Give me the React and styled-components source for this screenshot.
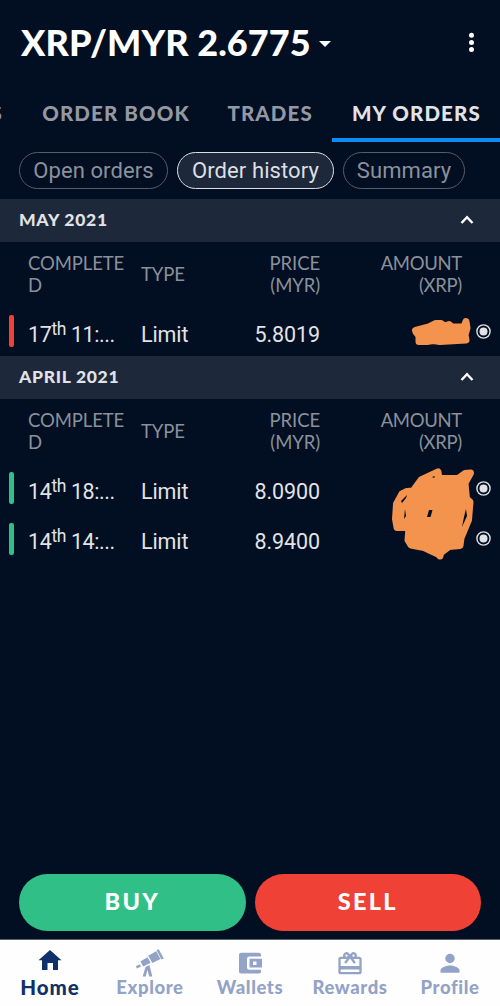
import styled, { createGlobalStyle } from "styled-components";

const GlobalStyle = createGlobalStyle`
    * {
        box-sizing: border-box;
    }
    body {
        margin: 0;
        background: #020e21;
    }
    button {
        font: inherit;
        border: 0;
        padding: 0;
        background: none;
        color: inherit;
    }
`;
const Screen = styled.div`
    display: flex;
    flex-direction: column;
    width: 500px;
    height: 1006px;
    overflow: hidden;
    background: #020e21;
    color: #e1e3e6;
    font-family: Roboto, sans-serif;
`;
const Header = styled.header`
    display: flex;
    align-items: center;
    justify-content: space-between;
    height: 84px;
    padding: 0 25px 0 21px;
    color: #fff;
`;
const Pair = styled.button`
    display: flex;
    align-items: center;
    gap: 8px;
    svg {
        margin-top: 3px;
    }
`;
const PairName = styled.span`
    font: 900 36px/44px Lato, sans-serif;
    letter-spacing: 0.07px;
    white-space: nowrap;
`;
const Tabs = styled.nav`
    display: flex;
    flex: none;
    justify-content: flex-end;
    height: 58px;
`;
const Tab = styled.button`
    display: flex;
    flex: none;
    justify-content: flex-end;
    padding-right: 19.2px;
    width: ${props => props.$width}px;
    border-bottom: 4px solid ${props => props.$active ? "#0d8cf5" : "transparent"};
    color: ${props => props.$active ? "#e1e3e6" : "#9398a2"};
    font: 900 20.5px/58px Lato, sans-serif;
    letter-spacing: 1.1px;
    white-space: nowrap;
`;
const Chips = styled.div`
    display: flex;
    gap: 9px;
    height: 57px;
    padding: 10px 19px;
`;
const Chip = styled.button`
    width: ${props => props.$width}px;
    height: 37px;
    border: 1px solid ${props => props.$active ? "#dcdfe3" : "#555c6a"};
    border-radius: 19px;
    background: ${props => props.$active ? "#1d283a" : "transparent"};
    color: ${props => props.$active ? "#dcdfe3" : "#8b919c"};
    font-size: 22px;
    letter-spacing: 0.08px;
    white-space: nowrap;
`;
const MonthBar = styled.div`
    display: flex;
    align-items: center;
    justify-content: space-between;
    height: 43px;
    padding: 0 26px 2px 19px;
    background: #1d283a;
    font: 900 17.5px/24px Lato, sans-serif;
    letter-spacing: 0.7px;
`;
const Grid = styled.div`
    display: grid;
    grid-template-columns: 19px 113px 79px 100px 142px 1fr;
    align-items: center;
    padding-left: 9px;
`;
const ColumnHeads = styled(Grid)`
    height: 64px;
    padding-bottom: 1px;
    color: #8b919c;
    font: 400 18.5px/22px Lato, sans-serif;
`;
const ColumnHead = styled.div`
    width: ${props => props.$width || "auto"};
    text-align: ${props => props.$right ? "right" : "left"};
    letter-spacing: ${props => props.$tight ? "-0.3px" : "-0.1px"};
    overflow-wrap: anywhere;
`;
const OrderRow = styled(Grid)`
    height: 50.3px;
    font-size: 21.5px;
`;
const SideMark = styled.div`
    width: 5px;
    height: 32px;
    border-radius: 2px;
    background: ${props => props.$side === "buy" ? "#2fbf87" : "#ef4136"};
`;
const Cell = styled.div`
    padding-top: 7px;
    line-height: 26px;
    text-align: ${props => props.$right ? "right" : "left"};
    letter-spacing: ${props => props.$tight ? "-0.4px" : "-0.1px"};
    white-space: nowrap;
    sup {
        font-size: 17.5px;
        line-height: 0;
        vertical-align: 7px;
    }
`;
const Radio = styled.span`
    display: flex;
    justify-content: flex-end;
    padding-right: 9px;
`;
const Orders = styled.main`
    position: relative;
    flex: 1;
`;
const Scribble = styled.svg`
    position: absolute;
    left: 380px;
    top: 100px;
    pointer-events: none;
`;
const Actions = styled.div`
    display: flex;
    gap: 9px;
    padding: 0 19px 8px;
`;
const Action = styled.button`
    flex: 1;
    height: 57px;
    border-radius: 29px;
    background: ${props => props.$side === "buy" ? "#2fbf87" : "#ef4136"};
    color: #fff;
    font: 900 23.5px/54px Lato, sans-serif;
    letter-spacing: 2.3px;
    padding-bottom: 3px;
`;
const BottomNav = styled.nav`
    display: grid;
    grid-template-columns: repeat(5, 1fr);
    height: 67px;
    border-top: 1px solid #59616d;
    background: #fefefe;
`;
const NavItem = styled.button`
    display: flex;
    flex-direction: column;
    align-items: center;
    padding-top: 8px;
    color: ${props => props.$active ? "#10306c" : "#93a2c7"};
    font: 900 ${props => props.$active ? "20.5px" : "18.5px"}/22px Lato, sans-serif;
    letter-spacing: ${props => props.$active ? "0.9px" : "0.6px"};
    svg {
        flex: none;
        overflow: visible;
    }
`;

const sections = [
    { month: "MAY 2021", orders: [{ side: "sell", day: "17", time: "11:...", price: "5.8019" }] },
    {
        month: "APRIL 2021",
        orders: [
            { side: "buy", day: "14", time: "18:...", price: "8.0900" },
            { side: "buy", day: "14", time: "14:...", price: "8.9400" },
        ],
    },
];

function HomeIcon() {
    return (
        <svg width="30" height="28" viewBox="0 0 30 28" fill="currentColor">
            <path d="M15 2 26.500 12.200H23V22H18V15H12.500V22H7V12.200H3.500Z" />
        </svg>
    );
}

function ExploreIcon() {
    return (
        <svg width="30" height="28" viewBox="0 0 30 28" fill="currentColor">
            <path d="M21.500 2.300 23.800 1.300 28.700 10.500 26.500 11.500Z" />
            <path d="M13.200 7.700 21.200 3.300 25.500 11 17.300 15Z" />
            <path d="M5.300 13.500 12.500 9.300 15.600 14.800 8.300 18.600Z" />
            <path d="M0.800 18.300 4.700 16.300 6 18.500 2 20.600Z" />
            <path d="M10.500 19 14.500 17 17.300 28.500H14.200L12.500 22 10.700 28.500H7.700Z" />
        </svg>
    );
}

function WalletIcon() {
    return (
        <svg width="30" height="28" viewBox="0 0 30 28" fill="currentColor">
            <path d="M6 4.700H24Q26 4.700 26 6.700V8.500H14.500Q12 8.500 12 11V19.200Q12 21.700 14.500 21.700H26V23.500Q26 25.500 24 25.500H6Q4 25.500 4 23.500V6.700Q4 4.700 6 4.700Z" />
            <path fillRule="evenodd" d="M14.500 10.800H27V19.500H14.500ZM18 13.500V17H21.500V13.500Z" />
        </svg>
    );
}

function RewardsIcon() {
    return (
        <svg width="30" height="28" viewBox="0 -1.500 24 24" fill="currentColor">
            <path d="M20 6h-2.180c.110-.310.180-.650.180-1a3 3 0 0 0-5.500-1.650l-.500.670-.500-.680A3 3 0 0 0 6 5c0 .350.070.690.180 1H4c-1.110 0-1.990.890-1.990 2L2 19c0 1.110.890 2 2 2h16c1.110 0 2-.890 2-2V8c0-1.110-.890-2-2-2zm-5-2a1 1 0 1 1 0 2 1 1 0 0 1 0-2zM9 4a1 1 0 1 1 0 2 1 1 0 0 1 0-2zm11 15H4v-2h16zm0-5H4V8h5.080L7 10.830 8.620 12 12 7.400 15.380 12 17 10.830 14.920 8H20z" />
        </svg>
    );
}

function ProfileIcon() {
    return (
        <svg width="30" height="28" viewBox="0 0 30 28" fill="currentColor">
            <circle cx="15" cy="10.500" r="4.700" />
            <path d="M5.500 24.700V22.500C5.500 19 12 17.500 15 17.500S24.500 19 24.500 22.500V24.700Z" />
        </svg>
    );
}

const navItems = [
    { label: "Home", Icon: HomeIcon },
    { label: "Explore", Icon: ExploreIcon },
    { label: "Wallets", Icon: WalletIcon },
    { label: "Rewards", Icon: RewardsIcon },
    { label: "Profile", Icon: ProfileIcon },
];

function Section({ month, orders }) {
    return (
        <section>
            <MonthBar>
                {month}
                <svg width="14" height="10" viewBox="0 0 14 10" fill="none" stroke="#fff" strokeWidth="2.400">
                    <path d="M1.500 8 7 2.200 12.500 8" />
                </svg>
            </MonthBar>
            <ColumnHeads>
                <span />
                <ColumnHead $width="100px">COMPLETED</ColumnHead>
                <ColumnHead>TYPE</ColumnHead>
                <ColumnHead $right>PRICE<br />(MYR)</ColumnHead>
                <ColumnHead $right $tight>AMOUNT<br />(XRP)</ColumnHead>
            </ColumnHeads>
            {orders.map(order => (
                <OrderRow key={order.time}>
                    <SideMark $side={order.side} />
                    <Cell $tight>{order.day}<sup>th</sup> {order.time}</Cell>
                    <Cell>Limit</Cell>
                    <Cell $right>{order.price}</Cell>
                    <span />
                    <Radio>
                        <svg width="15" height="15" viewBox="0 0 15 15">
                            <circle cx="7.500" cy="7.500" r="6.600" fill="none" stroke="#e1e3e6" strokeWidth="1.400" />
                            <circle cx="7.500" cy="7.500" r="4" fill="#e1e3e6" />
                        </svg>
                    </Radio>
                </OrderRow>
            ))}
        </section>
    );
}

export default function App() {
    return (
        <>
            <GlobalStyle />
            <Screen>
                <Header>
                    <Pair>
                        <PairName>XRP/MYR 2.6775</PairName>
                        <svg width="12" height="6" viewBox="0 0 12 6"><path d="M0 0H12L6 6Z" fill="#fff" /></svg>
                    </Pair>
                    <svg width="7" height="20" viewBox="0 0 7 20" fill="#fff">
                        <circle cx="3.500" cy="3.300" r="2.500" />
                        <circle cx="3.500" cy="10.500" r="2.500" />
                        <circle cx="3.500" cy="17.500" r="2.500" />
                    </svg>
                </Header>
                <Tabs>
                    <Tab $width={22}>S</Tab>
                    <Tab $width={187}>ORDER BOOK</Tab>
                    <Tab $width={123}>TRADES</Tab>
                    <Tab $width={168} $active>MY ORDERS</Tab>
                </Tabs>
                <Chips>
                    <Chip $width={149}>Open orders</Chip>
                    <Chip $width={157} $active>Order history</Chip>
                    <Chip $width={122}>Summary</Chip>
                </Chips>
                <Orders>
                    {sections.map(section => <Section key={section.month} {...section} />)}
                    <Scribble width="100" height="270" viewBox="380 299 100 270">
                        <g fill="#f3934d" stroke="#f3934d" strokeWidth="7" strokeLinejoin="round">
                            <path d="M415.500 330.500 429 327 436 323.500 441 323.500 444 326 449 324.500 452 327 464 327 466 321.500 467 328 465 335 466 340 440 341.500 433 340.500 427 341.500 419 341.500 419 336 416 332Z" />
                            <path d="M421 480 438 472 439 478.500 458 478.500 465 473.500 470.500 473 465 483 466.500 499 470 502 468.500 520 461 538 460 545.500 449 546.500 440.500 553 440 556 438 554 424 547.500 411 545 408 540 409 527.500 397 527.500 395.500 519 396.500 504 402 494 407 491.500 413 491Z" />
                        </g>
                        <path fill="#020e21" d="M401 501 407 495 406 498 402 503ZM405 509 406 516 404 519ZM429 510H432.500L430.500 517H427ZM466 509 467 516 462 527 464 517ZM432 477 435 476 434 478Z" />
                    </Scribble>
                </Orders>
                <Actions>
                    <Action $side="buy">BUY</Action>
                    <Action $side="sell">SELL</Action>
                </Actions>
                <BottomNav>
                    {navItems.map(({ label, Icon }) => (
                        <NavItem key={label} $active={label === "Home"}>
                            <Icon />
                            {label}
                        </NavItem>
                    ))}
                </BottomNav>
            </Screen>
        </>
    );
}
